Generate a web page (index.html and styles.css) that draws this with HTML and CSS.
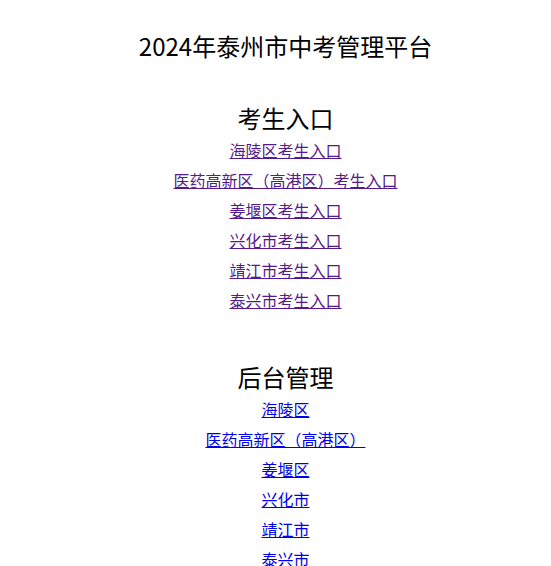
FILE: index.html
```html
<!DOCTYPE html>
<html lang="zh-CN">
<head>
  <meta charset="UTF-8">
  <meta name="viewport" content="width=device-width, initial-scale=1.0">
  <title>2024年泰州市中考管理平台</title>
  <link rel="stylesheet" href="styles.css">
</head>
<body>
  <h2 class="title">2024年泰州市中考管理平台</h2>

  <div class="section">
    <h2 class="section-title">考生入口</h2>
    <div class="links">
      <a class="visited" href="#hl">海陵区考生入口</a>
      <a class="visited" href="#yy">医药高新区（高港区）考生入口</a>
      <a class="visited" href="#jy">姜堰区考生入口</a>
      <a class="visited" href="#xh">兴化市考生入口</a>
      <a class="visited" href="#jj">靖江市考生入口</a>
      <a class="visited" href="#tx">泰兴市考生入口</a>
    </div>
  </div>

  <div class="section admin">
    <h2 class="section-title">后台管理</h2>
    <div class="links">
      <a href="#admin-hl">海陵区</a>
      <a href="#admin-yy">医药高新区（高港区）</a>
      <a href="#admin-jy">姜堰区</a>
      <a href="#admin-xh">兴化市</a>
      <a href="#admin-jj">靖江市</a>
      <a href="#admin-tx">泰兴市</a>
    </div>
  </div>
</body>
</html>
```

FILE: styles.css
```css
body {
  margin: 8px;
  padding-left: 20px;
  font-family: "Noto Sans CJK SC", "Noto Sans", sans-serif;
  text-align: center;
  color: #000;
  background: #fff;
}

.title {
  font-size: 24px;
  font-weight: normal;
  margin: 20px 0 0;
  line-height: 35px;
}

.section {
  margin-top: 38px;
}

.section.admin {
  margin-top: 45px;
}

.section-title {
  font-size: 24px;
  font-weight: normal;
  margin: 0;
  line-height: 34px;
}

.links {
  display: flex;
  flex-direction: column;
  align-items: center;
}

.links a {
  font-size: 16px;
  line-height: 30px;
  color: #0000ee;
}

.links a.visited {
  color: #551a8b;
}
```
